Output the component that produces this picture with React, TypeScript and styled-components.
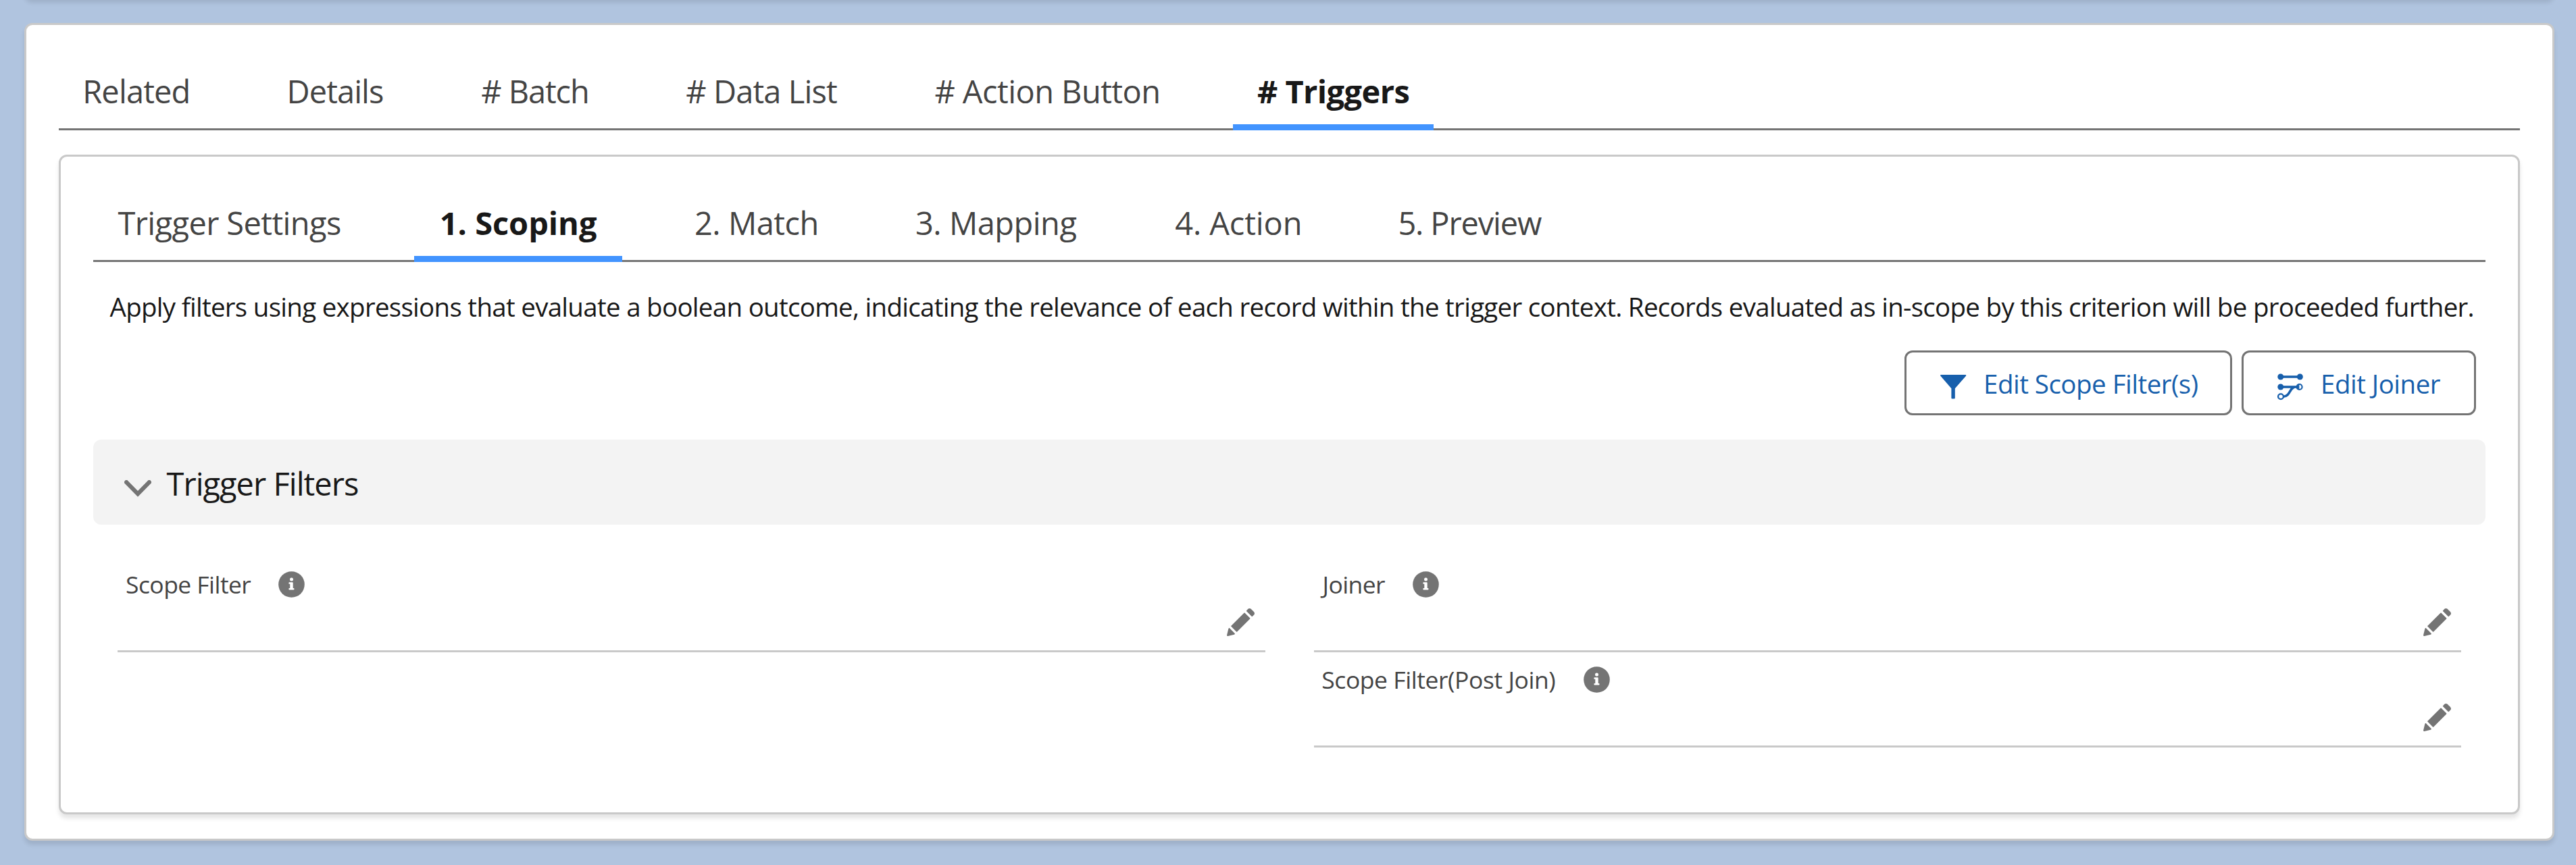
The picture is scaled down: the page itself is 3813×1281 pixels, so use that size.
import React from "react";
import styled, { createGlobalStyle } from "styled-components";

const GlobalStyle = createGlobalStyle`
  *, *::before, *::after { box-sizing: border-box; }
  body {
    margin: 0;
    background: #b0c4df;
    font-family: "Open Sans", "Noto Sans", sans-serif;
    color: #181818;
  }
`;

const Page = styled.div`
  display: flex;
  flex-direction: column;
  height: 1281px;
  padding: 0 32px 36px 36px;
  overflow: hidden;
`;

const Card = styled.section`
  background: #fff;
  border: 3px solid #c9c9c9;
  border-radius: 12px;
  box-shadow: 0 6px 6px rgba(0, 0, 0, 0.1);
`;

const PreviousCard = styled(Card)`
  flex: none;
  height: 60px;
  margin-top: -62px;
`;

const RecordCard = styled(Card)`
  display: flex;
  flex-direction: column;
  flex: 1;
  margin-top: 36px;
  padding: 43px 48px 36px;
`;

const TriggerCard = styled(Card)`
  flex: 1;
  margin-top: 36px;
  padding: 43px 48px 0;
`;

const TabBar = styled.nav`
  display: flex;
  gap: 72px;
  height: 113px;
  border-bottom: 3px solid #747474;
`;

interface TabProps {
  $width: number;
  $inset: number;
  $spacing: number;
  $active?: boolean;
}

const Tab = styled.a<TabProps>`
  position: relative;
  flex: none;
  width: ${(p) => p.$width}px;
  height: 113px;
  padding-left: ${(p) => p.$inset}px;
  font-size: 47px;
  line-height: 111px;
  letter-spacing: ${(p) => p.$spacing}px;
  white-space: nowrap;
  color: ${(p) => (p.$active ? "#181818" : "#444")};
  font-weight: ${(p) => (p.$active ? 700 : 400)};

  &::after {
    content: "";
    display: ${(p) => (p.$active ? "block" : "none")};
    position: absolute;
    left: 0;
    right: 0;
    bottom: 0;
    height: 9px;
    background: #4294ff;
  }
`;

const Description = styled.p`
  margin: 36px 0 0;
  padding-left: 24.5px;
  font-size: 38.5px;
  line-height: 60px;
  letter-spacing: -0.713px;
  white-space: nowrap;
`;

const Actions = styled.div`
  display: flex;
  justify-content: flex-end;
  gap: 14px;
  margin-top: 35px;
  padding-right: 14px;
`;

const ActionButton = styled.button<{ $width: number }>`
  display: flex;
  align-items: center;
  gap: 25px;
  width: ${(p) => p.$width}px;
  height: 96px;
  padding: 2px 0 0 50px;
  border: 3px solid #747474;
  border-radius: 12px;
  background: #fff;
  color: #175fac;
  font: 400 38.5px/60px "Open Sans", "Noto Sans", sans-serif;
  letter-spacing: -0.51px;
  white-space: nowrap;

  svg {
    flex: none;
    margin-top: 10px;
  }
`;

const SectionHeader = styled.h3`
  display: flex;
  align-items: center;
  gap: 22.5px;
  height: 126px;
  margin: 36px 0 0;
  padding: 4px 0 0 46px;
  border-radius: 12px;
  background: #f3f3f3;
  font-size: 47px;
  font-weight: 400;
  line-height: 66px;
  letter-spacing: -0.975px;

  svg {
    margin-top: 14px;
  }
`;

const FieldGrid = styled.div`
  display: grid;
  grid-template-columns: 1fr 1fr;
  column-gap: 72px;
  margin-top: 48px;
  padding: 0 36px;
`;

const FieldColumn = styled.div`
  display: flex;
  flex-direction: column;
`;

const FieldBox = styled.div`
  height: 141px;
  padding: 21px 15.5px 0 0;
  border-bottom: 3px solid #c9c9c9;
`;

const FieldHead = styled.div`
  display: flex;
  align-items: center;
  height: 39px;
`;

const FieldLabel = styled.span<{ $width: number; $inset: number; $spacing: number }>`
  flex: none;
  width: ${(p) => p.$width}px;
  padding-left: ${(p) => p.$inset}px;
  font-size: 35.5px;
  line-height: 39px;
  letter-spacing: ${(p) => p.$spacing}px;
  white-space: nowrap;
  color: #444;
`;

const FieldValue = styled.div`
  display: flex;
  justify-content: flex-end;
  padding-top: 16px;
`;

const FilterIcon = () => (
  <svg width="39" height="40" viewBox="0 0 39 40" fill="currentColor">
    <path d="M1 2H37.4Q38.8 2.2 38 3.7L21.8 22.2V36.5Q21.8 37.6 20.7 37.6H17.5Q16.4 37.6 16.4 36.5V22.2L.4 3.7Q-.4 2.2 1 2Z" />
  </svg>
);

const JoinerIcon = () => (
  <svg width="39" height="40" viewBox="0 0 39 40" fill="none" stroke="currentColor">
    <path d="M5 5H33M5 20H30M9 34.2C19 34.2 18 20 27 20" strokeWidth="3.6" />
    <g fill="currentColor" stroke="none">
      <circle cx="4.8" cy="5" r="4.5" />
      <circle cx="33.4" cy="5" r="4.5" />
      <circle cx="4.8" cy="20" r="4.5" />
    </g>
    <circle cx="32.6" cy="20" r="4" strokeWidth="2.2" fill="#fff" />
    <path d="M32.4 16V24A4 4 0 0 1 32.4 16Z" fill="currentColor" stroke="none" />
    <circle cx="5" cy="34.2" r="3.9" strokeWidth="2.3" fill="#fff" />
  </svg>
);

const ChevronIcon = () => (
  <svg width="40" height="25" viewBox="0 0 40 25" fill="none" stroke="#747474">
    <path d="M3.1 3.1L20 20.3L36.9 3.1" strokeWidth="6.2" strokeLinecap="round" />
  </svg>
);

const InfoIcon = () => (
  <svg width="39" height="39" viewBox="0 0 39 39">
    <circle cx="19.5" cy="19.5" r="19.3" fill="#747474" />
    <g fill="#fff">
      <circle cx="19.5" cy="11.9" r="2.5" />
      <path d="M16.2 16.2H20.8Q21.7 16.2 21.7 17.1V24.9H22.6Q23.5 24.9 23.5 25.8V26.5Q23.5 27.4 22.6 27.4H16.3Q15.4 27.4 15.4 26.5V25.8Q15.4 24.9 16.3 24.9H17.3V18.8H16.3Q15.4 18.8 15.4 17.9V17.1Q15.4 16.2 16.2 16.2Z" />
    </g>
  </svg>
);

const EditIcon = () => (
  <svg width="41" height="41" viewBox="2 2 48 48" fill="#747474">
    <path d="M9.5 33.4l8.9 8.9c.4.4 1 .4 1.4 0L42 20c.4-.4.4-1 0-1.4l-8.8-8.8c-.4-.4-1-.4-1.4 0L9.5 32.1c-.4.4-.4 1 0 1.3zM36.1 5.7c-.4.4-.4 1 0 1.4l8.8 8.8c.4.4 1 .4 1.4 0l2.5-2.5c1.6-1.5 1.6-3.9 0-5.5l-4.7-4.7c-1.6-1.6-4.1-1.6-5.7 0l-2.3 2.5zM2.1 48.2c-.2 1 .7 1.9 1.7 1.7l10.9-2.6c.4-.1.7-.3.9-.5l.2-.2c.2-.2.3-.9-.1-1.3l-9-9c-.4-.4-1.1-.3-1.3-.1l-.2.2c-.3.3-.4.6-.5.9L2.1 48.2z" />
  </svg>
);

interface TabData {
  label: string;
  width: number;
  inset: number;
  spacing: number;
  active?: boolean;
}

const recordTabs: TabData[] = [
  { label: "Related", width: 231, inset: 35.2, spacing: -0.85 },
  { label: "Details", width: 215, inset: 34.6, spacing: -0.95 },
  { label: "# Batch", width: 231, inset: 35.3, spacing: -1.1 },
  { label: "# Data List", width: 296, inset: 35.3, spacing: -0.9 },
  { label: "# Action Button", width: 405, inset: 35.4, spacing: -0.56 },
  { label: "# Triggers", width: 297, inset: 36, spacing: -0.59, active: true },
];

const triggerTabs: TabData[] = [
  { label: "Trigger Settings", width: 403, inset: 36.5, spacing: -0.62 },
  { label: "1. Scoping", width: 308, inset: 37.8, spacing: -0.05, active: true },
  { label: "2. Match", width: 255, inset: 35, spacing: -0.5 },
  { label: "3. Mapping", width: 312, inset: 35, spacing: -0.51 },
  { label: "4. Action", width: 258, inset: 35.3, spacing: -0.15 },
  { label: "5. Preview", width: 300, inset: 35.4, spacing: -1.16 },
];

const Tabs = ({ items }: { items: TabData[] }) => (
  <TabBar>
    {items.map((t) => (
      <Tab key={t.label} $width={t.width} $inset={t.inset} $spacing={t.spacing} $active={t.active}>
        {t.label}
      </Tab>
    ))}
  </TabBar>
);

interface FieldProps {
  label: string;
  width: number;
  inset: number;
  spacing: number;
}

const Field = ({ label, width, inset, spacing }: FieldProps) => (
  <FieldBox>
    <FieldHead>
      <FieldLabel $width={width} $inset={inset} $spacing={spacing}>
        {label}
      </FieldLabel>
      <InfoIcon />
    </FieldHead>
    <FieldValue>
      <EditIcon />
    </FieldValue>
  </FieldBox>
);

export default function App() {
  return (
    <>
      <GlobalStyle />
      <Page>
        <PreviousCard />
        <RecordCard>
          <Tabs items={recordTabs} />
          <TriggerCard>
            <Tabs items={triggerTabs} />
            <Description>
              Apply filters using expressions that evaluate a boolean outcome, indicating the relevance of each record
              within the trigger context. Records evaluated as in-scope by this criterion will be proceeded further.
            </Description>
            <Actions>
              <ActionButton $width={485}>
                <FilterIcon />
                Edit Scope Filter(s)
              </ActionButton>
              <ActionButton $width={347}>
                <JoinerIcon />
                Edit Joiner
              </ActionButton>
            </Actions>
            <SectionHeader>
              <ChevronIcon />
              Trigger Filters
            </SectionHeader>
            <FieldGrid>
              <FieldColumn>
                <Field label="Scope Filter" width={237.6} inset={12} spacing={-0.56} />
              </FieldColumn>
              <FieldColumn>
                <Field label="Joiner" width={146.6} inset={13} spacing={-0.6} />
                <Field label="Scope Filter(Post Join)" width={399.6} inset={11.8} spacing={-0.44} />
              </FieldColumn>
            </FieldGrid>
          </TriggerCard>
        </RecordCard>
      </Page>
    </>
  );
}
